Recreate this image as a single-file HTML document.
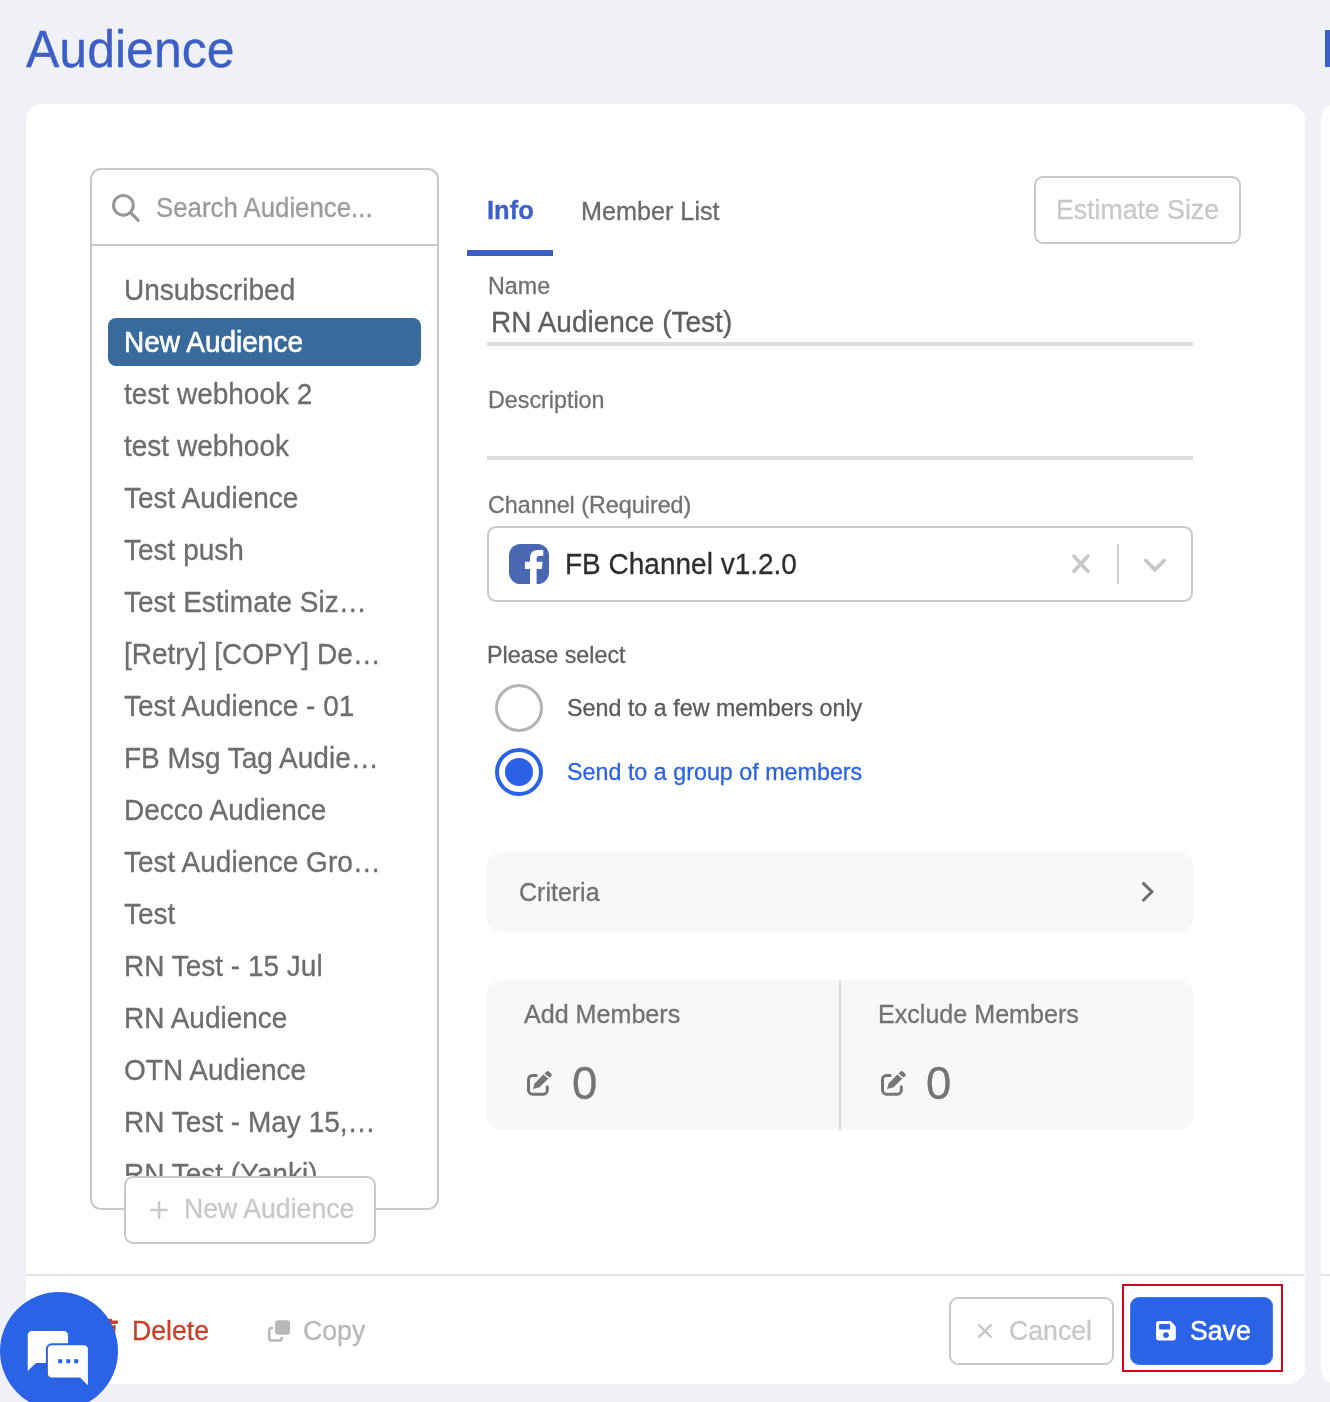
<!DOCTYPE html>
<html><head><meta charset="utf-8">
<style>
*{box-sizing:border-box;margin:0;padding:0}
html,body{width:1330px;height:1402px;overflow:hidden;background:#f0f1f6;font-family:"Liberation Sans",sans-serif}
.a{position:absolute}
.t{position:absolute;white-space:nowrap;line-height:1;transform-origin:0 84.65%;transform:scaleY(1.042);-webkit-text-stroke:0.3px currentColor;will-change:transform}
.li{position:absolute;left:123.5px;white-space:nowrap;line-height:1;font-size:28px;color:#6d6d6d;transform-origin:0 84.65%;transform:scaleY(1.042);-webkit-text-stroke:0.3px currentColor;will-change:transform}
</style></head><body>
<!-- page title -->
<div class="t" style="left:26px;top:25px;font-size:50px;color:#3d5fc5">Audience</div>
<div class="a" style="left:1325px;top:30px;width:6px;height:37px;background:#3d5fc5"></div>
<!-- cards -->
<div class="a" style="left:26px;top:104px;width:1279px;height:1280px;background:#fff;border-radius:16px"></div>
<div class="a" style="left:1321px;top:104px;width:400px;height:1280px;background:#fff;border-radius:16px"></div>
<!-- footer divider -->
<div class="a" style="left:26px;top:1274px;width:1279px;height:2px;background:#e3e3e3"></div>
<div class="a" style="left:1321px;top:1274px;width:20px;height:2px;background:#e3e3e3"></div>

<!-- LEFT PANEL -->
<div class="a" style="left:90px;top:168px;width:349px;height:1042px;border:2px solid #c9c9c9;border-radius:11px;overflow:hidden">
  <div class="a" style="left:0;top:74px;width:100%;height:2px;background:#c9c9c9"></div>
</div>
<svg class="a" style="left:110px;top:192px" width="34" height="32" viewBox="0 0 34 32">
  <circle cx="13.4" cy="13.3" r="9.9" fill="none" stroke="#979797" stroke-width="3"/>
  <line x1="20.6" y1="20.6" x2="28.3" y2="28.3" stroke="#979797" stroke-width="3.2" stroke-linecap="round"/>
</svg>
<div class="t" style="left:155.6px;top:196.2px;font-size:25.8px;color:#9b9b9b">Search Audience...</div>

<div class="a" style="left:108px;top:318px;width:313px;height:48px;background:#386a9b;border-radius:8px"></div>
<div class="li" style="top:277.4px">Unsubscribed</div>
<div class="li" style="top:329.4px;color:#fff;-webkit-text-stroke:0.6px #fff">New Audience</div>
<div class="li" style="top:381.4px">test webhook 2</div>
<div class="li" style="top:433.4px">test webhook</div>
<div class="li" style="top:485.4px">Test Audience</div>
<div class="li" style="top:537.4px">Test push</div>
<div class="li" style="top:589.4px">Test Estimate Siz…</div>
<div class="li" style="top:641.4px">[Retry] [COPY] De…</div>
<div class="li" style="top:693.4px">Test Audience - 01</div>
<div class="li" style="top:745.4px">FB Msg Tag Audie…</div>
<div class="li" style="top:797.4px">Decco Audience</div>
<div class="li" style="top:849.4px">Test Audience Gro…</div>
<div class="li" style="top:901.4px">Test</div>
<div class="li" style="top:953.4px">RN Test - 15 Jul</div>
<div class="li" style="top:1005.4px">RN Audience</div>
<div class="li" style="top:1057.4px">OTN Audience</div>
<div class="li" style="top:1109.4px">RN Test - May 15,…</div>
<div class="a" style="left:92px;top:1150px;width:345px;height:26px;overflow:hidden">
  <div class="li" style="left:31.5px;top:11.4px">RN Test (Yanki)</div>
</div>
<!-- new audience button -->
<div class="a" style="left:124px;top:1176px;width:252px;height:68px;background:#fff;border:2px solid #c9c9c9;border-radius:9px"></div>
<svg class="a" style="left:148px;top:1198px" width="24" height="24" viewBox="0 0 24 24">
  <path d="M11.05 4.3V19.6M3.4 11.95H18.7" stroke="#c8c8c8" stroke-width="2.6" stroke-linecap="round"/>
</svg>
<div class="t" style="left:184px;top:1196.2px;font-size:26.67px;color:#c8c8c8">New Audience</div>

<!-- TABS -->
<div class="t" style="left:486.8px;top:198.3px;font-size:25.5px;font-weight:bold;color:#3f60c6">Info</div>
<div class="t" style="left:580.6px;top:198.5px;font-size:25.2px;color:#6a6a6a">Member List</div>
<div class="a" style="left:467px;top:250px;width:86px;height:6px;background:#3d5fc5"></div>
<div class="a" style="left:1034px;top:176px;width:207px;height:68px;border:2px solid #c9c9c9;border-radius:9px"></div>
<div class="t" style="left:1056px;top:197px;font-size:26.67px;color:#c8c8c8">Estimate Size</div>

<!-- NAME -->
<div class="t" style="left:487.5px;top:274.5px;font-size:23.3px;color:#717171">Name</div>
<div class="t" style="left:490.8px;top:308.9px;font-size:28px;color:#5e5e5e">RN Audience (Test)</div>
<div class="a" style="left:487px;top:342px;width:706px;height:4px;background:#dedede"></div>
<div class="t" style="left:487.5px;top:388.7px;font-size:23.3px;color:#717171">Description</div>
<div class="a" style="left:487px;top:456px;width:706px;height:4px;background:#dedede"></div>

<!-- CHANNEL -->
<div class="t" style="left:487.5px;top:494.3px;font-size:23.3px;color:#717171">Channel (Required)</div>
<div class="a" style="left:487px;top:526px;width:706px;height:76px;border:2px solid #c9c9c9;border-radius:9px"></div>
<svg class="a" style="left:509px;top:544px" width="40" height="40" viewBox="0 0 40 40">
  <rect x="0" y="0" width="40" height="40" rx="11.5" fill="#4a67b1"/>
  <path d="M21 40V25H15.9V17.7H21V14C21 8.8 24.2 5.9 29 5.9H34.3V11.7H30.8C28.6 11.7 27.6 12.8 27.6 15V17.7H33.6L32.8 25H27.6V40Z" fill="#fff"/>
</svg>
<div class="t" style="left:565px;top:550.5px;font-size:28px;color:#2e2e2e">FB Channel v1.2.0</div>
<svg class="a" style="left:1068px;top:551px" width="26" height="26" viewBox="0 0 26 26">
  <path d="M6 5.2L19.8 20.3M19.8 5.2L6 20.3" stroke="#c8c8c8" stroke-width="3.9" stroke-linecap="round"/>
</svg>
<div class="a" style="left:1117px;top:544px;width:2px;height:40px;background:#cccccc"></div>
<svg class="a" style="left:1140px;top:554px" width="30" height="22" viewBox="0 0 30 22">
  <path d="M5.8 6.6L15 15.6L24.2 6.6" fill="none" stroke="#c8c8c8" stroke-width="3.8" stroke-linecap="round" stroke-linejoin="round"/>
</svg>

<!-- RADIOS -->
<div class="t" style="left:487px;top:643.5px;font-size:23.3px;color:#606060">Please select</div>
<div class="a" style="left:495px;top:684px;width:48px;height:48px;border:3.8px solid #b4b4b4;border-radius:50%"></div>
<div class="t" style="left:566.6px;top:696.6px;font-size:23.3px;color:#5a5a5a">Send to a few members only</div>
<div class="a" style="left:495px;top:748px;width:48px;height:48px;border:4px solid #2b63e6;border-radius:50%"></div>
<div class="a" style="left:505px;top:758px;width:28px;height:28px;background:#2b61e5;border-radius:50%"></div>
<div class="t" style="left:566.6px;top:760.6px;font-size:23.3px;color:#2b63e0">Send to a group of members</div>

<!-- CRITERIA -->
<div class="a" style="left:487px;top:852px;width:706px;height:80px;background:#f8f8f8;border-radius:14px"></div>
<div class="t" style="left:519.2px;top:879.6px;font-size:25px;color:#717171">Criteria</div>
<svg class="a" style="left:1136px;top:878px" width="24" height="28" viewBox="0 0 24 28">
  <path d="M6.6 4.6L15.9 13.8L6.6 23" fill="none" stroke="#6e6e6e" stroke-width="3"/>
</svg>

<!-- MEMBERS -->
<div class="a" style="left:487px;top:980px;width:706px;height:150px;background:#f8f8f8;border-radius:14px"></div>
<div class="a" style="left:839px;top:980px;width:2px;height:150px;background:#dcdcdc"></div>
<div class="t" style="left:524.1px;top:1002.3px;font-size:25.1px;color:#727272">Add Members</div>
<div class="t" style="left:878.4px;top:1002.3px;font-size:25.1px;color:#727272">Exclude Members</div>
<svg class="a" style="left:526px;top:1070px" width="28" height="27" viewBox="0 0 28 27">
  <path d="M10.1 5.4H6.5C4.3 5.4 2.5 7.2 2.5 9.4V20.2C2.5 22.4 4.3 24.2 6.5 24.2H17.3C19.5 24.2 21.3 22.4 21.3 20.2V16.7" fill="none" stroke="#757575" stroke-width="3" stroke-linecap="round"/>
  <path d="M7 19L8.6 13.4L17.4 4.6L22.3 8.5L13.6 17.2Z" fill="#757575"/>
  <path d="M18.5 3.5L20.3 1.7C21.1 0.9 22.3 0.9 23.1 1.7L25.1 3.6C25.9 4.4 25.9 5.6 25.1 6.4L23.4 7.4Z" fill="#757575"/>
</svg>
<svg class="a" style="left:880px;top:1070px" width="28" height="27" viewBox="0 0 28 27">
  <path d="M10.1 5.4H6.5C4.3 5.4 2.5 7.2 2.5 9.4V20.2C2.5 22.4 4.3 24.2 6.5 24.2H17.3C19.5 24.2 21.3 22.4 21.3 20.2V16.7" fill="none" stroke="#757575" stroke-width="3" stroke-linecap="round"/>
  <path d="M7 19L8.6 13.4L17.4 4.6L22.3 8.5L13.6 17.2Z" fill="#757575"/>
  <path d="M18.5 3.5L20.3 1.7C21.1 0.9 22.3 0.9 23.1 1.7L25.1 3.6C25.9 4.4 25.9 5.6 25.1 6.4L23.4 7.4Z" fill="#757575"/>
</svg>
<div class="t" style="left:572px;top:1060.6px;font-size:45.5px;color:#747474;transform:none">0</div>
<div class="t" style="left:926px;top:1060.6px;font-size:45.5px;color:#747474;transform:none">0</div>

<!-- FOOTER -->
<svg class="a" style="left:100px;top:1318px" width="20" height="26" viewBox="0 0 20 26">
  <rect x="0" y="2.5" width="17.9" height="3.4" rx="0.8" fill="#c8412b"/>
  <rect x="6" y="0.8" width="6" height="2.5" rx="0.8" fill="#c8412b"/>
  <path d="M1.8 7.3H15.8L15 17.4C14.9 18.3 14.3 18.8 13.5 18.8H4.2C3.4 18.8 2.8 18.3 2.7 17.4Z" fill="#c8412b"/>
</svg>
<div class="t" style="left:132px;top:1318.2px;font-size:26.67px;color:#c8412b">Delete</div>
<svg class="a" style="left:266px;top:1318px" width="26" height="26" viewBox="0 0 26 26">
  <path d="M6 10H5.5C4.2 10 3.25 10.95 3.25 12.25V20.25C3.25 21.55 4.2 22.5 5.5 22.5H13.5C14.8 22.5 15.75 21.55 15.75 20.25V20" fill="none" stroke="#b8b8b8" stroke-width="2.5" stroke-linecap="round"/>
  <rect x="9" y="2.2" width="15" height="14.5" rx="3" fill="#b8b8b8"/>
</svg>
<div class="t" style="left:303.2px;top:1318.2px;font-size:26.67px;color:#b8b8b8">Copy</div>

<div class="a" style="left:949px;top:1297px;width:165px;height:68px;border:2px solid #c9c9c9;border-radius:9px"></div>
<svg class="a" style="left:974px;top:1320px" width="22" height="22" viewBox="0 0 22 22">
  <path d="M5.3 5.3L16.7 16.7M16.7 5.3L5.3 16.7" stroke="#c8c8c8" stroke-width="2.5" stroke-linecap="round"/>
</svg>
<div class="t" style="left:1009.2px;top:1318.3px;font-size:26.67px;color:#c8c8c8">Cancel</div>

<div class="a" style="left:1130px;top:1297px;width:143px;height:68px;background:#2b63e6;border:1.5px solid #4079f3;border-radius:9px"></div>
<svg class="a" style="left:1154px;top:1320px" width="24" height="24" viewBox="0 0 24 24">
  <path d="M4.6 1.1H16.6L21.8 6.5V18C21.8 19.4 20.7 20.5 19.3 20.5H4.6C3.2 20.5 2.1 19.4 2.1 18V3.6C2.1 2.2 3.2 1.1 4.6 1.1Z" fill="#fff"/>
  <rect x="5.1" y="4.1" width="11" height="5.3" rx="1" fill="#2b63e6"/>
  <circle cx="12" cy="15.1" r="2.9" fill="#2b63e6"/>
</svg>
<div class="t" style="left:1190px;top:1318.3px;font-size:26.67px;color:#fff;-webkit-text-stroke:0.55px #fff">Save</div>
<div class="a" style="left:1122px;top:1284px;width:161px;height:88px;border:2px solid #d0021b"></div>

<!-- CHAT BUBBLE -->
<div class="a" style="left:0px;top:1292px;width:118px;height:118px;background:#2b63e6;border-radius:50%"></div>
<svg class="a" style="left:20px;top:1325px" width="80" height="70" viewBox="0 0 80 70">
  <path d="M12 6H44C46.2 6 48 7.8 48 10V38H16L7.7 46V10C7.7 7.8 9.5 6 11.7 6Z" fill="#fff"/>
  <path d="M31.6 20.3H64.2C66.2 20.3 67.9 22 67.9 24V60.3L60 52.4H31.6C29.6 52.4 27.9 50.7 27.9 48.7V24C27.9 22 29.6 20.3 31.6 20.3Z" fill="#fff" stroke="#2b63e6" stroke-width="4" paint-order="stroke"/>
  <rect x="38.2" y="34.2" width="4" height="4" fill="#2b63e6"/>
  <rect x="46.3" y="34.2" width="4" height="4" fill="#2b63e6"/>
  <rect x="54.2" y="34.2" width="4" height="4" fill="#2b63e6"/>
</svg>
</body></html>
